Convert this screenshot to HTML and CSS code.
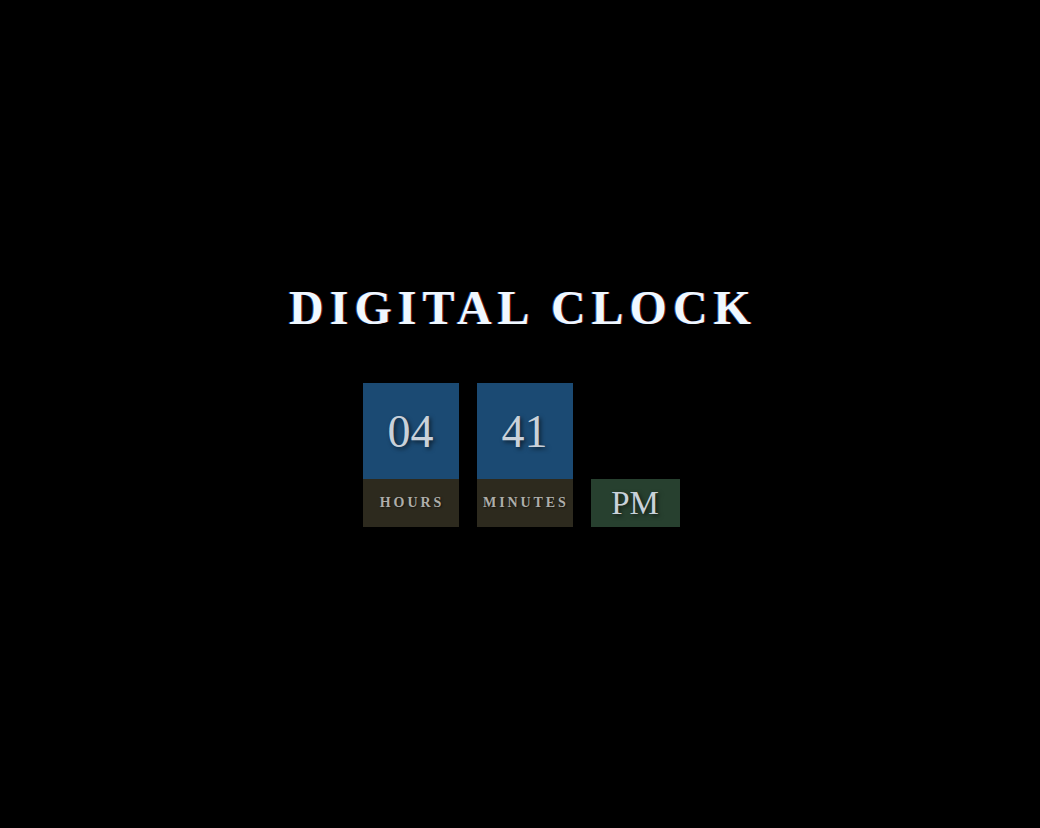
FILE: index.html
```html
<!DOCTYPE html>
<html lang="en">
<head>
<meta charset="utf-8">
<title>Digital Clock</title>
<link rel="stylesheet" href="styles.css">
</head>
<body>
<main class="page">
  <h1 class="title">DIGITAL CLOCK</h1>
  <div class="clock">
    <div class="unit">
      <div class="value">04</div>
      <div class="label">HOURS</div>
    </div>
    <div class="unit">
      <div class="value">41</div>
      <div class="label">MINUTES</div>
    </div>
    <div class="period">PM</div>
  </div>
</main>
</body>
</html>
```
FILE: styles.css
```css
html, body {
  margin: 0;
  padding: 0;
  background: #000;
}
body {
  font-family: "Liberation Serif", "Times New Roman", serif;
  width: 1040px;
  height: 828px;
}
.page {
  display: flex;
  flex-direction: column;
  align-items: center;
  padding-top: 284px;
}
.title {
  margin: 0 0 51px 6px;
  font-size: 48px;
  line-height: 48px;
  font-weight: bold;
  letter-spacing: 6px;
  color: #f0f8ff;
  text-shadow: -1px 0 0 rgba(60, 140, 255, 0.55), 1px 0 0 rgba(200, 40, 40, 0.55);
}
.clock {
  display: flex;
  align-items: flex-end;
  gap: 18px;
  margin-left: 2px;
}
.unit {
  display: flex;
  flex-direction: column;
  width: 96px;
}
.value {
  height: 96px;
  background: #1b4a73;
  color: #c9d1da;
  font-size: 46px;
  display: flex;
  align-items: center;
  justify-content: center;
  text-shadow: 2px 2px 4px rgba(0, 0, 0, 0.55);
}
.label {
  height: 48px;
  background: #2d2a1e;
  color: #aeaeaa;
  font-size: 14px;
  font-weight: bold;
  letter-spacing: 2.9px;
  display: flex;
  align-items: center;
  justify-content: center;
  padding-left: 2.9px;
  text-shadow: 1px 1px 2px rgba(0, 0, 0, 0.5);
}
.period {
  height: 48px;
  width: 89px;
  background: #27402f;
  color: #c9d1da;
  font-size: 33px;
  display: flex;
  align-items: center;
  justify-content: center;
  text-shadow: 2px 2px 4px rgba(0, 0, 0, 0.55);
}
```
